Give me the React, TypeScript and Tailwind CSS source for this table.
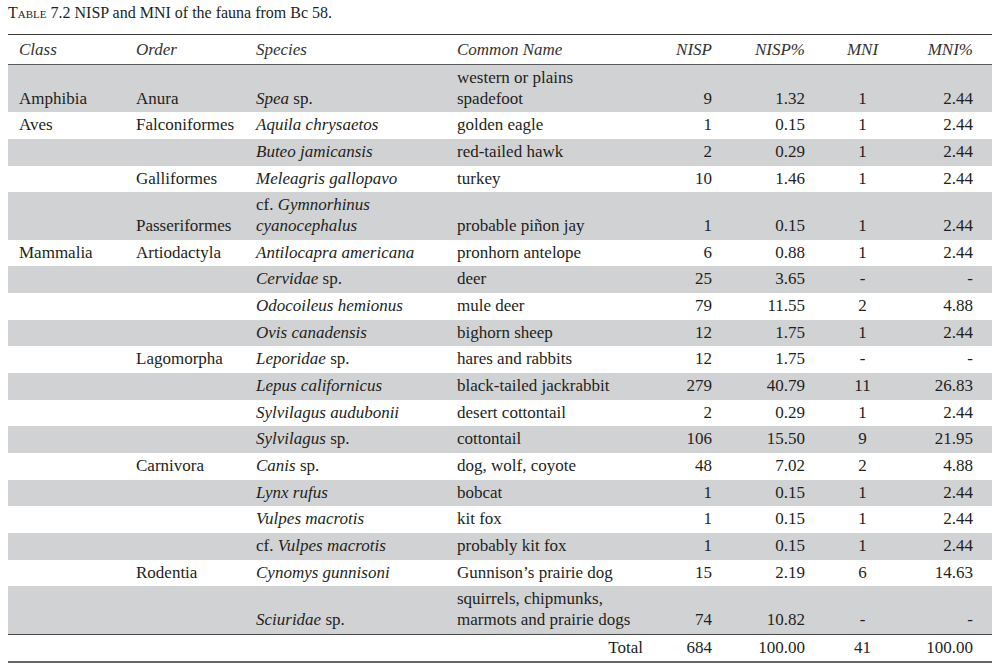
type Row = {
  cls?: string;
  order?: string;
  species: React.ReactNode;
  common: React.ReactNode;
  nisp: string;
  nispPct: string;
  mni: string;
  mniPct: string;
};

const rows: Row[] = [
  { cls: "Amphibia", order: "Anura", species: <><i>Spea</i> sp.</>, common: <>western or plains<br />spadefoot</>, nisp: "9", nispPct: "1.32", mni: "1", mniPct: "2.44" },
  { cls: "Aves", order: "Falconiformes", species: <i>Aquila chrysaetos</i>, common: "golden eagle", nisp: "1", nispPct: "0.15", mni: "1", mniPct: "2.44" },
  { species: <i>Buteo jamicansis</i>, common: "red-tailed hawk", nisp: "2", nispPct: "0.29", mni: "1", mniPct: "2.44" },
  { order: "Galliformes", species: <i>Meleagris gallopavo</i>, common: "turkey", nisp: "10", nispPct: "1.46", mni: "1", mniPct: "2.44" },
  { order: "Passeriformes", species: <>cf. <i>Gymnorhinus</i><br /><i>cyanocephalus</i></>, common: "probable piñon jay", nisp: "1", nispPct: "0.15", mni: "1", mniPct: "2.44" },
  { cls: "Mammalia", order: "Artiodactyla", species: <i>Antilocapra americana</i>, common: "pronhorn antelope", nisp: "6", nispPct: "0.88", mni: "1", mniPct: "2.44" },
  { species: <><i>Cervidae</i> sp.</>, common: "deer", nisp: "25", nispPct: "3.65", mni: "-", mniPct: "-" },
  { species: <i>Odocoileus hemionus</i>, common: "mule deer", nisp: "79", nispPct: "11.55", mni: "2", mniPct: "4.88" },
  { species: <i>Ovis canadensis</i>, common: "bighorn sheep", nisp: "12", nispPct: "1.75", mni: "1", mniPct: "2.44" },
  { order: "Lagomorpha", species: <><i>Leporidae</i> sp.</>, common: "hares and rabbits", nisp: "12", nispPct: "1.75", mni: "-", mniPct: "-" },
  { species: <i>Lepus californicus</i>, common: "black-tailed jackrabbit", nisp: "279", nispPct: "40.79", mni: "11", mniPct: "26.83" },
  { species: <i>Sylvilagus audubonii</i>, common: "desert cottontail", nisp: "2", nispPct: "0.29", mni: "1", mniPct: "2.44" },
  { species: <><i>Sylvilagus</i> sp.</>, common: "cottontail", nisp: "106", nispPct: "15.50", mni: "9", mniPct: "21.95" },
  { order: "Carnivora", species: <><i>Canis</i> sp.</>, common: "dog, wolf, coyote", nisp: "48", nispPct: "7.02", mni: "2", mniPct: "4.88" },
  { species: <i>Lynx rufus</i>, common: "bobcat", nisp: "1", nispPct: "0.15", mni: "1", mniPct: "2.44" },
  { species: <i>Vulpes macrotis</i>, common: "kit fox", nisp: "1", nispPct: "0.15", mni: "1", mniPct: "2.44" },
  { species: <>cf. <i>Vulpes macrotis</i></>, common: "probably kit fox", nisp: "1", nispPct: "0.15", mni: "1", mniPct: "2.44" },
  { order: "Rodentia", species: <i>Cynomys gunnisoni</i>, common: "Gunnison’s prairie dog", nisp: "15", nispPct: "2.19", mni: "6", mniPct: "14.63" },
  { species: <><i>Sciuridae</i> sp.</>, common: <>squirrels, chipmunks,<br />marmots and prairie dogs</>, nisp: "74", nispPct: "10.82", mni: "-", mniPct: "-" },
];

const td = "align-bottom pt-[3px] pb-[3px] leading-[20.67px] whitespace-nowrap";
const th = "align-bottom pt-[5px] pb-[4px] leading-[20px] font-normal";

export default function App() {
  return (
    <div className="w-[1000px] h-[670px] bg-white px-[8px] pt-[3px] text-[#231f20] text-[17px] [font-family:'Liberation_Serif',serif] oldstyle-nums">
      <div className="leading-[20px] text-[16px]">
        <span className="[font-variant-caps:small-caps]">Table 7.2</span> NISP and MNI of the fauna from Bc 58.
      </div>

      <table className="mt-[11px] w-[984px] table-fixed border-collapse">
        <colgroup>
          <col className="w-[122px]" />
          <col className="w-[120px]" />
          <col className="w-[201px]" />
          <col className="w-[201px]" />
          <col className="w-[68px]" />
          <col className="w-[100px]" />
          <col className="w-[85px]" />
          <col className="w-[87px]" />
        </colgroup>
        <thead>
          <tr className="border-t-[1.5px] border-b border-t-[#3a3a3a] border-b-[#5a5a5a] italic text-[#333]">
            <th className={`${th} text-left pl-[11px]`}>Class</th>
            <th className={`${th} text-left pl-[6px]`}>Order</th>
            <th className={`${th} text-left pl-[6px]`}>Species</th>
            <th className={`${th} text-left pl-[6px]`}>Common Name</th>
            <th className={`${th} text-right pr-[8px]`}>NISP</th>
            <th className={`${th} text-right pr-[15px]`}>NISP%</th>
            <th className={`${th} text-center`}>MNI</th>
            <th className={`${th} text-right pr-[19px]`}>MNI%</th>
          </tr>
        </thead>
        <tbody>
          {rows.map((r, i) => (
            <tr
              key={i}
              className={`${i % 2 === 0 ? "bg-[#d1d2d4]" : "bg-white"} ${i === rows.length - 1 ? "border-b-[1.5px] border-b-[#4a4a4a]" : ""}`}
            >
              <td className={`${td} pl-[11px]`}>{r.cls}</td>
              <td className={`${td} pl-[6px]`}>{r.order}</td>
              <td className={`${td} pl-[6px]`}>{r.species}</td>
              <td className={`${td} pl-[6px]`}>{r.common}</td>
              <td className={`${td} text-right pr-[8px]`}>{r.nisp}</td>
              <td className={`${td} text-right pr-[15px]`}>{r.nispPct}</td>
              <td className={`${td} text-center`}>{r.mni}</td>
              <td className={`${td} text-right pr-[19px]`}>{r.mniPct}</td>
            </tr>
          ))}
          <tr className="border-b-2 border-b-[#666]">
            <td className={td}></td>
            <td className={td}></td>
            <td className={td}></td>
            <td className={`${td} text-right pr-[9px]`}>Total</td>
            <td className={`${td} text-right pr-[8px]`}>684</td>
            <td className={`${td} text-right pr-[15px]`}>100.00</td>
            <td className={`${td} text-center`}>41</td>
            <td className={`${td} text-right pr-[19px]`}>100.00</td>
          </tr>
        </tbody>
      </table>
    </div>
  );
}
